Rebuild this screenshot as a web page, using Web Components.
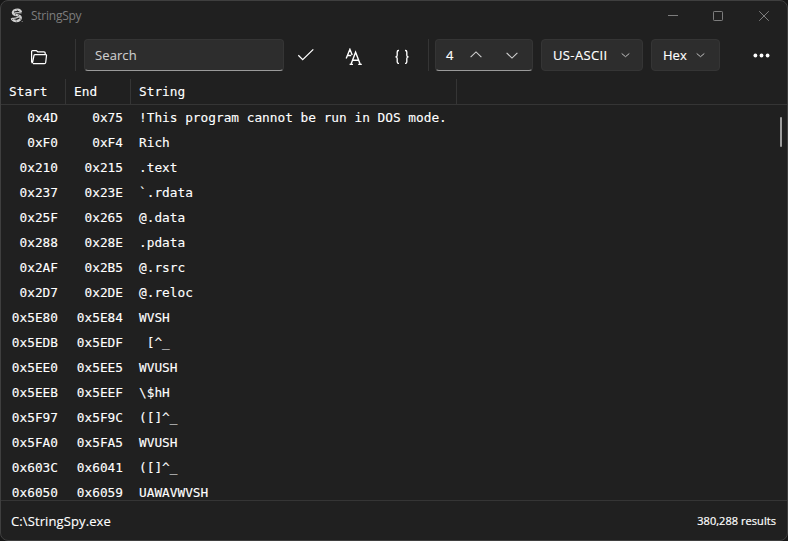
<!DOCTYPE html>
<html lang="en"><head><meta charset="utf-8"><title>StringSpy</title>
<style>
html,body{margin:0;height:100%;background:#171717;overflow:hidden}
body{font:13px "Open Sans","Noto Sans",sans-serif;color:#fff}
</style></head><body>
<spy-window></spy-window>
<script>
const define=(name,html,setup)=>customElements.define(name,class extends HTMLElement{
  connectedCallback(){
    if(this.shadowRoot)return;
    const t=document.createElement('template');
    t.innerHTML=typeof html==='function'?html(this):html;
    this.attachShadow({mode:'open'}).append(t.content.cloneNode(true));
    if(setup)setup(this);
  }
});

const icons={
  logo:[16,16,'<path d="M12 4.300C11.500 1.900 9.200 1.400 6.700 1.900C3.600 2.500 3.100 5.300 5.200 6.500C7.200 7.500 10.900 7 11.600 9.100C12.300 11.400 9.800 13.300 6.800 13C4.600 12.800 3 12 2.900 10.300" stroke="#d0d0d0" stroke-width="2.300"/><path d="M4 6C6.500 4.500 9.500 4.500 12.600 5M2.800 10.200C6 11.300 9 9 11.500 8.300" stroke="#c4c4c4" stroke-width="1.200"/><path d="M5 3l1 .8M8 1.700l.6 1M6 7.200l1-.8M9 8l.8-.9M11 10.800l1 .6M7 12.300l.4 1.200M4 11l-.7 1" stroke="#555" stroke-width=".9"/><path d="M12.500 13.500h1.500" stroke="#666"/>'],
  folder:[18,16,'<path d="M1.600 13.200V2.500Q1.600 1.500 2.600 1.500H6.200L7.800 2.800H14Q15.200 2.800 15.200 4V5.500M3 14.500H14.500Q15.500 14.500 15.700 13.500L16.500 6.500Q16.600 5.500 15.600 5.500H5.200Q4.200 5.500 4 6.400L2.600 13.400Q2.200 14.500 1.600 13.500" stroke-width="1.250"/>'],
  check:[18,14,'<path d="M1.300 7.300L5.700 11.600L16.300 1.400" stroke-width="1.300"/>'],
  match:[18,18,'<path d="M1.200 10.500L4.900 1.300L7.200 7M2.500 7.500H6.200M6 16.300L10.600 4.300L15.200 16.300M7.500 12.300H13.700M4.600 16.400H8M13.200 16.400H16.800" stroke-width="1.400"/>'],
  braces:[16,16,'<path d="M5 1.500H4.500Q3.200 1.500 3.200 3V6.200Q3.200 7.700 1.500 7.900Q3.200 8.100 3.200 9.600V12.700Q3.200 14.300 4.500 14.300H5M11 1.500H11.500Q12.800 1.500 12.800 3V6.200Q12.800 7.700 14.500 7.900Q12.800 8.100 12.800 9.600V12.700Q12.800 14.300 11.500 14.300H11" stroke-width="1.350"/>'],
  up:[12,8,'<path d="M.6 6.200L6 .9L11.400 6.200" stroke="#d0d0d0" stroke-width="1.100"/>'],
  down:[12,8,'<path d="M.6 1.800L6 7.100L11.400 1.800" stroke="#d0d0d0" stroke-width="1.100"/>'],
  chev:[9,6,'<path d="M.7 1.500L4.500 4.700L8.300 1.500" stroke="#c0c0c0"/>'],
  more:[17,5,'<g fill="currentColor" stroke="none"><circle cx="2.400" cy="2.500" r="1.900"/><circle cx="8.500" cy="2.500" r="1.900"/><circle cx="14.600" cy="2.500" r="1.900"/></g>'],
  min:[10,10,'<path d="M0 4.500H10"/>'],
  max:[10,10,'<rect x=".5" y=".5" width="9" height="9" rx=".7"/>'],
  close:[10,10,'<path d="M.2.200L9.800 9.800M9.800.200L.2 9.800"/>']
};
define('spy-icon',el=>{
  const [w,h,d]=icons[el.getAttribute('name')];
  return `<style>:host{display:block;flex:none;width:${w}px;height:${h}px}svg{display:block}</style>
  <svg width="${w}" height="${h}" viewBox="0 0 ${w} ${h}" fill="none" stroke="currentColor">${d}</svg>`;
});

define('spy-titlebar',`<style>
:host{display:flex;align-items:center;height:30px;padding-left:8px;color:#7d7d7d;font-size:12px}
span{margin-left:6px;flex:1;line-height:16px;letter-spacing:-.25px}
nav{display:flex;gap:36px;margin-right:18px;margin-top:-1px}
nav spy-icon:first-child{margin-right:-1px}
</style><spy-icon name="logo"></spy-icon><span>StringSpy</span>
<nav><spy-icon name="min"></spy-icon><spy-icon name="max"></spy-icon><spy-icon name="close"></spy-icon></nav>`);

define('spy-button',`<style>:host{display:flex;align-items:center;justify-content:center;box-sizing:border-box;width:48px;height:32px;flex:none}</style><slot></slot>`);
define('spy-divider',`<style>:host{display:block;width:1px;height:32px;background:#353535;flex:none}</style>`);
define('spy-field',`<style>
:host{display:flex;align-items:center;box-sizing:border-box;height:32px;background:#2d2d2d;border:1px solid #353535;border-bottom-color:#9a9a9a;border-radius:4px;flex:none;white-space:nowrap}
</style><slot></slot>`);
define('spy-select',`<style>
:host{display:flex;align-items:center;box-sizing:border-box;height:32px;background:#2d2d2d;border:1px solid #353535;border-radius:4px;padding:0 12px 0 11px;flex:none;white-space:nowrap;justify-content:space-between}
</style><slot></slot><spy-icon name="chev"></spy-icon>`);

define('spy-toolbar',`<style>
:host{display:flex;align-items:center;height:48px;-webkit-text-stroke:.15px}
.search{width:200px;margin-left:8px;padding-left:10px;color:#cfcfcf;letter-spacing:.1px;-webkit-text-stroke:.08px}
.open{width:74px;padding:4px 0 0 2px}
.check{width:44px}
.match{padding-top:3px;margin-left:2px}
.braces{padding-top:3px}
.num{width:98px;margin-left:6px;padding-left:10px}
.num spy-icon:nth-of-type(1){margin-left:17px}
.num spy-icon:nth-of-type(2){margin-left:24px}
.enc{width:102px;margin-left:8px}
.enc span{letter-spacing:.38px}
.fmt{width:69px;margin-left:8px;padding-right:14px}
.more{margin-left:auto;margin-right:2px}
</style>
<spy-button class="open"><spy-icon name="folder"></spy-icon></spy-button><spy-divider></spy-divider>
<spy-field class="search"><span>Search</span></spy-field>
<spy-button class="check"><spy-icon name="check"></spy-icon></spy-button>
<spy-button class="match"><spy-icon name="match"></spy-icon></spy-button>
<spy-button class="braces"><spy-icon name="braces"></spy-icon></spy-button>
<spy-divider style="margin-left:2px"></spy-divider>
<spy-field class="num"><span>4</span><spy-icon name="up"></spy-icon><spy-icon name="down"></spy-icon></spy-field>
<spy-select class="enc"><span>US-ASCII</span></spy-select>
<spy-select class="fmt"><span>Hex</span></spy-select>
<spy-button class="more"><spy-icon name="more"></spy-icon></spy-button>`);

define('spy-row',`<style>
:host{display:grid;grid-template-columns:57px 65px 1fr;height:25px;line-height:25px;white-space:pre}
.n{text-align:right}.s{padding-left:16px}
</style><span class="n"><slot name="start"></slot></span><span class="n"><slot name="end"></slot></span><span class="s"><slot></slot></span>`);

define('spy-table',`<style>
:host{display:flex;flex-direction:column;flex:1;min-height:0;font:12.79px "DejaVu Sans Mono",monospace;-webkit-text-stroke:.12px}
header{display:grid;grid-template-columns:65px 65px 326px;height:25px;line-height:25px;border-bottom:1px solid #353535;flex:none}
header span{box-sizing:border-box;padding-left:8px;border-right:1px solid #353535}
main{flex:1;min-height:0;overflow:hidden;display:flex}
section{flex:1}
i{width:2px;height:30px;margin:12px 5px 0 0;border-radius:1px;background:#9b9b9b}
</style><header><span>Start</span><span>End</span><span>String</span></header><main><section></section><i></i></main>`,el=>{
  const rows=[['0x4D','0x75','!This program cannot be run in DOS mode.'],['0xF0','0xF4','Rich'],['0x210','0x215','.text'],['0x237','0x23E','`.rdata'],['0x25F','0x265','@.data'],['0x288','0x28E','.pdata'],['0x2AF','0x2B5','@.rsrc'],['0x2D7','0x2DE','@.reloc'],['0x5E80','0x5E84','WVSH'],['0x5EDB','0x5EDF',' [^_'],['0x5EE0','0x5EE5','WVUSH'],['0x5EEB','0x5EEF','\\$hH'],['0x5F97','0x5F9C','([]^_'],['0x5FA0','0x5FA5','WVUSH'],['0x603C','0x6041','([]^_'],['0x6050','0x6059','UAWAVWVSH']];
  const list=el.shadowRoot.querySelector('section');
  for(const [a,b,s] of rows){
    const row=document.createElement('spy-row');
    for(const [slot,text] of [['start',a],['end',b],['',s]]){
      const c=document.createElement('span');
      if(slot)c.slot=slot;
      c.textContent=text;
      row.append(c);
    }
    list.append(row);
  }
});

define('spy-status',`<style>
:host{display:flex;justify-content:space-between;align-items:center;height:39px;border-top:1px solid #353535;padding:0 11px 0 10px;flex:none;letter-spacing:.11px;-webkit-text-stroke:.12px}
.r{font-size:11px;letter-spacing:.05px;-webkit-text-stroke:.2px}
</style><span>C:\\StringSpy.exe</span><span class="r">380,288 results</span>`);

define('spy-window',`<style>
:host{display:flex;flex-direction:column;box-sizing:border-box;width:788px;height:541px;background:#202020;border:1px solid #3f3f3f;border-radius:8px;overflow:hidden}
</style><spy-titlebar></spy-titlebar><spy-toolbar></spy-toolbar><spy-table></spy-table><spy-status></spy-status>`);
</script></body></html>
